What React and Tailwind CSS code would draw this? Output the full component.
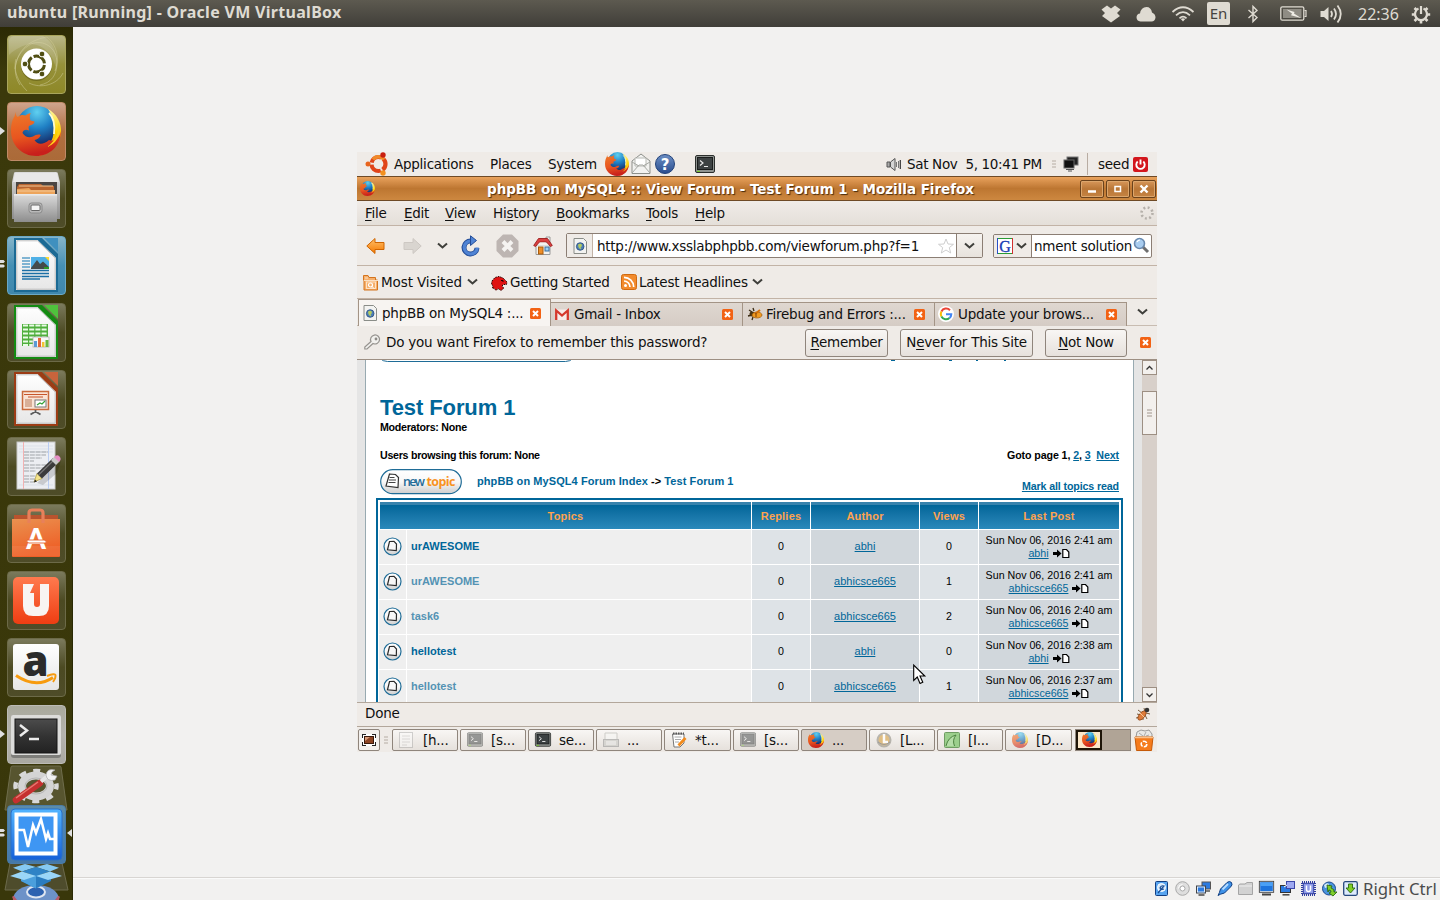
import React from "react";

const cx = (...a) => a.filter(Boolean).join(" ");

function Icon({ w, h, box, className, children }) {
  return (
    <svg width={w} height={h} viewBox={box || `0 0 ${w} ${h}`} className={cx("shrink-0 block overflow-visible", className)} fill="none">
      {children}
    </svg>
  );
}

function Gradients() {
  return (
    <svg className="absolute h-0 w-0">
      <defs>
        <radialGradient id="globe" cx="0.5" cy="0.15" r="0.9">
          <stop offset="0" stopColor="#5fd0f0" /><stop offset="0.45" stopColor="#1f7fc4" /><stop offset="1" stopColor="#14154f" />
        </radialGradient>
        <linearGradient id="fox" x1="0" y1="0" x2="0.2" y2="1">
          <stop offset="0" stopColor="#ee7a2a" /><stop offset="0.6" stopColor="#e8551f" /><stop offset="1" stopColor="#c81f1c" />
        </linearGradient>
        <linearGradient id="flame" x1="0" y1="0" x2="0" y2="1">
          <stop offset="0" stopColor="#fff6a0" /><stop offset="0.5" stopColor="#ffd400" /><stop offset="1" stopColor="#f07a18" />
        </linearGradient>
        <linearGradient id="metal" x1="0" y1="0" x2="0" y2="1">
          <stop offset="0" stopColor="#dcdcdc" /><stop offset="1" stopColor="#8d8d8d" />
        </linearGradient>
        <linearGradient id="paper" x1="0" y1="0" x2="0" y2="1">
          <stop offset="0" stopColor="#ffffff" /><stop offset="1" stopColor="#e6e6e6" />
        </linearGradient>
        <linearGradient id="bag" x1="0" y1="0" x2="0.3" y2="1">
          <stop offset="0" stopColor="#ea9150" /><stop offset="1" stopColor="#ee5f26" />
        </linearGradient>
        <linearGradient id="one" x1="0" y1="0" x2="0" y2="1">
          <stop offset="0" stopColor="#ff7a4e" /><stop offset="1" stopColor="#ee3d12" />
        </linearGradient>
        <linearGradient id="screen" x1="0" y1="0" x2="0" y2="1">
          <stop offset="0" stopColor="#4c4c4c" /><stop offset="0.5" stopColor="#333" /><stop offset="1" stopColor="#222" />
        </linearGradient>
        <linearGradient id="vbox" x1="0" y1="0" x2="0" y2="1">
          <stop offset="0" stopColor="#52b4ff" /><stop offset="1" stopColor="#1560d8" />
        </linearGradient>
        <linearGradient id="arrowOrange" x1="0" y1="0" x2="0" y2="1">
          <stop offset="0" stopColor="#ffc06a" /><stop offset="1" stopColor="#f57900" />
        </linearGradient>
        <linearGradient id="blueball" x1="0" y1="0" x2="0" y2="1">
          <stop offset="0" stopColor="#6d8fc4" /><stop offset="1" stopColor="#2a4d8f" />
        </linearGradient>
        <linearGradient id="pill" x1="0" y1="0" x2="0" y2="1">
          <stop offset="0" stopColor="#ffffff" /><stop offset="0.5" stopColor="#f8f8f8" /><stop offset="1" stopColor="#cdcdcd" />
        </linearGradient>
      </defs>
    </svg>
  );
}

function Firefox({ s, className }) {
  return (
    <Icon w={s} h={s} box="0 0 50 50" className={className}>
      <circle cx="26" cy="20.500" r="20.5" fill="url(#globe)" />
      <path d="M37 3 C46 8 50.500 17 50 26 C49 39 39 49 26 50 C33 46 41 38 42.500 28 C44 19 42 10 37 3Z" fill="url(#flame)" />
      <path d="M38 7 C43 12 44 20 43 28" stroke="#fffbd0" strokeWidth="1.8" />
      <path d="M4.700 5.500 C4.500 8 5 9.500 6.500 11 C10 8.500 12 8.500 14.500 9.500 C16 8.500 17.500 7.500 19.700 7 C18.500 9.500 18.500 12 19.500 14.500 L23.500 15.500 C23.500 18 20.500 19 18 20 C17 21 18 23 18 24.500 C15 23 12 24 11.500 27 C14 31 18 32 22 30.500 C24.500 29 27 28 29.700 29 C29 32 26 33.500 23.500 34 C26 38.500 32 39.500 38 34 C44 36 48 33 50 25 C49.500 40 39 50 25 50 C11 50 0 39 0 25 C0 17 2 12.500 3.500 10.500Z" fill="url(#fox)" />
      <path d="M47 17 C48.500 24 46 34 36 41 C42 39 47 34 48.500 27 C49 23 48.500 20 47 17Z" fill="#ffd21a" />
    </Icon>
  );
}

function Terminal({ w, h, className }) {
  return (
    <Icon w={w} h={h} box="0 0 20 18" className={className}>
      <rect x="0.5" y="0.5" width="19" height="17" rx="1.500" fill="#8f9390" stroke="#2c2f2d" />
      <rect x="2.500" y="2.500" width="15" height="12" fill="#3c4142" stroke="#1a1c1c" />
      <path d="M5 5.500 L8 8 L5 10.500 M9 11.500 h4" stroke="#e8e8e8" strokeWidth="1.200" />
      <path d="M2 16.300 h3" stroke="#73d216" />
    </Icon>
  );
}

/* Unity launcher */

function Tile({ tone, mark, children }) {
  const tones = {
    olive: "bg-linear-to-b from-[#b9b687] via-[#96913a] to-[#8e8827] border-[#a9a55c]",
    orange: "bg-linear-to-b from-[#cfa48c] via-[#b06f40] to-[#ab6a38] border-[#bf8a67]",
    dark: "bg-linear-to-b from-[#7b7a5c] via-[#4c4a22] to-[#4e4c28] border-[#6c6a48]",
    blue: "bg-linear-to-b from-[#86b5c9] via-[#4690b4] to-[#3f87ac] border-[#6aa9c6]",
    gray: "bg-linear-to-b from-[#a9a99c] via-[#b4b3ae] to-[#aaa9a2] border-[#bcbbb6]",
    vbox: "bg-linear-to-b from-[#5d8ca8] via-[#4a82b4] to-[#4579a8] border-[#4a7ca8]",
  };
  return (
    <div className="relative flex h-[59px] w-full shrink-0 justify-center">
      {mark === "one" && <Icon w={5} h={8} className="absolute left-0 top-[25px]"><path d="M0 0 L5 4 L0 8Z" fill="#e0e0e0" /></Icon>}
      {mark === "two" && <Icon w={5} h={8} className="absolute left-0 top-[24px]"><path d="M0 0h3.500l1.500 1.500l-1.500 1.500H0Z M0 4.500h3.500l1.500 1.500l-1.500 1.500H0Z" fill="#e0e0e0" /></Icon>}
      <div className={cx("flex h-[59px] w-[59px] items-center justify-center rounded-[4px] border", tones[tone])}>{children}</div>
    </div>
  );
}

function DocIcon({ edge, fold, children }) {
  return (
    <Icon w={59} h={59} className="-m-px">
      <path d="M8 3 H31 L50 21.500 V55 H8Z" fill="url(#paper)" stroke={edge} strokeWidth="2" />
      <path d="M9.800 4.800 H30.500 L48.200 22 V53.200 H9.800Z" stroke="#b8b8b8" strokeWidth="0.900" />
      <path d="M30 2 L51 22 V18 L35 2Z" fill={edge} />
      <path d="M37 2 H51 V16Z" fill={fold} />
      {children}
    </Icon>
  );
}

function Launcher() {
  return (
    <div className="relative flex h-[873px] w-[73px] shrink-0 flex-col gap-[8px] overflow-hidden border-r border-[#2a2905] bg-linear-to-b from-[#2b2905] via-[#3b390b] via-5% to-[#39370a] pt-[8px]">
      <Tile tone="olive">
        <Icon w={59} h={59} className="-m-px">
          <path d="M13 50 C4 36 8 18 24 9 C36 4 50 12 50 28 C50 40 44 48 33 50 M8 34 C10 18 18 6 40 2 C50 10 53 24 48 36 M20 56 C10 46 6 34 9 24 M56 38 C50 50 34 54 22 48" stroke="#ccc993" strokeOpacity="0.6" strokeWidth="0.9" />
          <path d="M36 1 C48 8 52 22 49 34 C46 20 38 10 24 9 C16 10 8 14 2 20 V6 Q3 1 8 1Z" fill="#fff" fillOpacity="0.14" />
          <circle cx="29.500" cy="30.500" r="15.500" fill="#55520f" fillOpacity="0.5" />
          <circle cx="29.500" cy="29" r="15.500" fill="#fff" />
          <circle cx="29.500" cy="29" r="8" stroke="#504e13" strokeWidth="3" strokeDasharray="14.700 2.050" strokeDashoffset="-1" />
          <circle cx="18" cy="29" r="2.900" fill="#504e13" stroke="#fff" strokeWidth="1" />
          <circle cx="35" cy="19" r="2.900" fill="#504e13" stroke="#fff" strokeWidth="1" />
          <circle cx="35" cy="39" r="2.900" fill="#504e13" stroke="#fff" strokeWidth="1" />
        </Icon>
      </Tile>
      <Tile tone="orange" mark="one"><Firefox s={50} className="-mt-[2px]" /></Tile>
      <Tile tone="dark">
        <Icon w={59} h={59} className="-m-px">
          <path d="M7 4 Q7 3 9 3 H49 Q51 3 51 5 L53 13 V50 H5 V13Z" fill="url(#metal)" />
          <path d="M8 4 H50 L52 13 H6Z" fill="#e8e8e8" />
          <rect x="9" y="13" width="41" height="14" fill="#4b4643" />
          <path d="M10 25 V18 L12 15 H34 L36 17 H47 V25Z" fill="#b9652f" />
          <path d="M10 25 V20 L22 19 L24 21 H48 V25Z" fill="#eda55c" />
          <path d="M10 22 H48 M12 17H46" stroke="#f3c795" />
          <path d="M7 25 H50 V53 H7Z" fill="url(#metal)" />
          <path d="M7 25 H50 V26.500 H7Z" fill="#e9e9e9" />
          <rect x="22" y="34" width="13" height="10" rx="2.500" fill="#b9b9b9" stroke="#8a8a8a" />
          <rect x="24" y="36" width="9" height="5.500" rx="1" fill="#f5f5f5" stroke="#666" />
        </Icon>
      </Tile>
      <Tile tone="blue" mark="two">
        <DocIcon edge="#1c6a94" fold="#3f90bf">
          <path d="M15 22h8 M15 25h8 M15 28h8 M15 31h8" stroke="#5a9fc8" strokeWidth="1.500" />
          <path d="M15 34.500h27 M15 37.500h27 M15 40.500h27 M15 43h18" stroke="#1b6fa5" strokeWidth="1.500" />
          <rect x="24" y="21" width="18" height="12" fill="#4fb0e6" />
          <path d="M24 32 L30 24 L33 28 L36 25.500 L42 31 V33 H24Z" fill="#444b4a" /><path d="M38 21h4v4Z" fill="#ffd92e" /><path d="M37 31h5v2h-5Z" fill="#2c9b28" />
        </DocIcon>
      </Tile>
      <Tile tone="dark">
        <DocIcon edge="#148a12" fold="#4fc23c">
          <rect x="15" y="21" width="26" height="22" fill="#4faf3d" />
          <path d="M16 22.500h24M16 26.500h24M16 30.500h24M16 34.500h24M16 38.500h24M16 42h24" stroke="#e9fbe6" strokeWidth="2.200" strokeDasharray="5 1.200" />
          <rect x="26" y="34" width="16" height="10" fill="#f8f8f8" stroke="#aaa" strokeWidth="0.7" />
          <path d="M28.500 44v-6" stroke="#5b9ad5" strokeWidth="3" /><path d="M32.500 44v-9" stroke="#e2683c" strokeWidth="3" /><path d="M36.200 44v-5" stroke="#f0c534" strokeWidth="2.500" /><path d="M40 44v-7" stroke="#68b842" strokeWidth="3" />
        </DocIcon>
      </Tile>
      <Tile tone="dark">
        <DocIcon edge="#9c3c15" fold="#c8643c">
          <rect x="15.500" y="21.500" width="26" height="18" fill="#f9e3d5" stroke="#c96b3d" strokeWidth="1.500" />
          <path d="M17 24.500h23M21 27h15" stroke="#c8552a" strokeWidth="1.200" />
          <path d="M18 30h7M18 32h7M18 34h7M18 36h7" stroke="#b97c5a" strokeWidth="1" />
          <rect x="28" y="30" width="11" height="7" fill="#fff" stroke="#777" /><path d="M30 35 l3-2 l2 1 l3-3" stroke="#35a33a" strokeWidth="1.200" />
          <path d="M28.500 40v3 M28.500 41.500 l-5 3 M28.500 41.500 l5 3" stroke="#5b5b5b" strokeWidth="1.800" />
        </DocIcon>
      </Tile>
      <Tile tone="dark">
        <Icon w={59} h={59} className="-m-px">
          <rect x="10" y="5" width="38" height="47" fill="#eceef2" stroke="#c8c8c8" />
          <path d="M12 9h34M12 12h34M12 15h34M12 48h34" stroke="#d5dbe6" strokeWidth="0.7" /><path d="M16.500 5v47" stroke="#f2b2b2" /><path d="M41.500 5v47" stroke="#b9cdf2" />
          <path d="M17 15h24M17 18h22M17 21h18M17 24h10 M17 28h24M17 31h20M17 34h12 M17 39h12M17 42h11M17 45h10" stroke="#a0a3a7" strokeWidth="1.100" strokeDasharray="5 0.800" />
          <path d="M30 46 L54 24 L50 36 L36 48Z" fill="#000" fillOpacity="0.15" />
          <path d="M27 45 L30 36.500 L35 41.500Z" fill="#f4e48c" stroke="#a79539" strokeWidth="0.700" /><path d="M27 45.500 l1-3 2 2Z" fill="#222" />
          <path d="M30 36.500 L46 21 L51 26 L35 41.500Z" fill="#3b3b3b" /><path d="M31.500 38 L47 23" stroke="#787878" strokeWidth="1.200" />
          <path d="M44 23 L47.500 19.500 L52.500 24.500 L49 28Z" fill="#c9c9c9" /><path d="M47 20 q3-3 5.500-0.500 q2.500 2.500-0.500 5.500Z" fill="#e58fc5" />
        </Icon>
      </Tile>
      <Tile tone="dark">
        <Icon w={59} h={59} className="-m-px">
          <path d="M7 11 H51 V16 H7Z" fill="#b9532e" />
          <path d="M5 15 H53 V52 Q53 53 52 53 H6 Q5 53 5 52Z" fill="url(#bag)" />
          <path d="M22 19 V9 Q22 6 25 6 H33 Q36 6 36 9 V19" stroke="#e8805a" strokeWidth="3.200" />
          <text x="29" y="45" textAnchor="middle" fontFamily="Lato" fontWeight="900" fontSize="28" fill="#fff">A</text>
          <path d="M20 36 h17 q3 0 2 3 h-17 q-3 0-2-3Z" fill="#fff" stroke="#e4622e" strokeWidth="0.900" />
          <path d="M5 42h48v10H5Z" fill="#fff" fillOpacity="0.07" />
        </Icon>
      </Tile>
      <Tile tone="dark">
        <Icon w={59} h={59} className="-m-px">
          <rect x="6" y="6" width="46" height="47" rx="5" fill="url(#one)" />
          <path d="M16 13 H27 L23 22 H27 V33 Q27 36 30 36 Q33 36 33 33 V13 H42 V35 Q42 45 32 45 H26 Q16 45 16 35Z" fill="#f8f4f2" />
        </Icon>
      </Tile>
      <Tile tone="dark">
        <Icon w={59} h={59} className="-m-px">
          <rect x="6" y="6" width="46" height="46" rx="3" fill="url(#paper)" />
          <text x="28.500" y="38" textAnchor="middle" fontFamily="Open Sans" fontWeight="800" fontSize="42" fill="#2b2b2b">a</text>
          <path d="M9 37.500 Q29 51 46 39.500" stroke="#f79b0e" strokeWidth="3" /><path d="M40 38 Q48 35 48.500 37 Q49 40 46 44" stroke="#f79b0e" strokeWidth="1.900" />
        </Icon>
      </Tile>
      <Tile tone="gray" mark="one">
        <Icon w={59} h={59} className="-m-px">
          <rect x="4" y="10" width="50" height="43" rx="3" fill="#7e7e7a" /><rect x="4" y="10" width="50" height="40" rx="2" fill="#dcdcda" />
          <rect x="8" y="14" width="42" height="34" fill="url(#screen)" stroke="#141414" />
          <path d="M13 20 L20 25.500 L13 31" stroke="#ececec" strokeWidth="2.500" /><path d="M22 34h10" stroke="#ececec" strokeWidth="2.500" />
        </Icon>
      </Tile>
      <Icon w={62} h={44} className="-mt-[6px] ml-[5px]">
        <path d="M6 1 Q6 0 8 0 H54 Q56 0 56 1 L62 44 H0Z" fill="#57552f" stroke="#6f6d4c" />
        <ellipse cx="31" cy="20" rx="20.500" ry="15" stroke="#d9d9d9" strokeWidth="4.500" strokeDasharray="7 7.050" strokeDashoffset="3.500" />
        <ellipse cx="31" cy="20" rx="14" ry="10.500" stroke="#d4d4d4" strokeWidth="8" />
        <ellipse cx="31" cy="20" rx="11" ry="8" stroke="#b4b4b4" strokeWidth="1" />
        <path d="M11 34 L35 17" stroke="#c53030" strokeWidth="6.500" strokeLinecap="round" /><path d="M11 32 L33 16" stroke="#e57a72" strokeWidth="1.500" />
        <path d="M36 15.500 L45 8" stroke="#e6e6e6" strokeWidth="4" /><path d="M50 4 q-8-2-9 5 q1 7 9 5 l2-4 -6-1 1-3Z" fill="#f2f2f2" stroke="#aaa" strokeWidth="0.700" />
      </Icon>
      <div className="relative z-10 -mt-[13px]">
        <Tile tone="vbox" mark="two">
          <Icon w={59} h={59} className="-m-px">
            <rect x="4" y="4" width="51" height="51" rx="4" fill="url(#vbox)" stroke="#2a70c8" />
            <rect x="9.500" y="9.500" width="39" height="39" fill="#3e96f3" stroke="#fff" strokeWidth="4" />
            <path d="M10 25 h7 L21 42 L26 20 L29 28 L34 14 L39 34 L41 28 L43 34 H48" stroke="#fff" strokeWidth="2.500" />
          </Icon>
        </Tile>
        <Icon w={5} h={8} className="absolute right-0 top-[24px]"><path d="M5 0 L0 4 L5 8Z" fill="#e0e0e0" /></Icon>
      </div>
      <Icon w={62} h={38} className="-mt-[9px] ml-[5px]">
        <path d="M5 0 H57 L63 27 H0Z" fill="#4e4c2c" stroke="#6c6a4c" />
        <ellipse cx="31" cy="36" rx="23" ry="14" fill="#6d92c8" /><path d="M8 36 q-2-3 1-3 l3 4 v3h-4Z M54 36q2-3-1-3 l-3 4 v3h4Z" fill="#b85a68" />
        <ellipse cx="31" cy="29" rx="9" ry="5.500" fill="#2d62b0" stroke="#dfe6f0" strokeWidth="2" />
        <path d="M16 15 L31 10 L46 15 V18 L31 25.500 L16 18Z" fill="#2a7cc0" />
        <path d="M16 15 L31 12 V25.500 L16 18Z" fill="#4b9fdc" />
        <path d="M8 4.700 L20 1 L31 4 L17 8.500Z M54 4.700 L42 1 L31 4 L45 8.500Z" fill="#86caf2" />
        <path d="M17 8.500 L31 4 L45 8.500 L31 13Z" fill="#2f83c6" />
        <path d="M5 13 L17 8.500 L31 13 L19 17Z M57 13 L45 8.500 L31 13 L43 17Z" fill="#9ad6f8" />
      </Icon>
    </div>
  );
}

/* Host top panel */

function TopBar() {
  const c = "#dfdbd2";
  return (
    <div className="flex h-[27px] w-full shrink-0 items-center bg-linear-to-b from-[#5d5a50] to-[#403e39] text-[#dfdbd2]">
      <div className="ml-[7px] w-[1093px] whitespace-nowrap pb-[2px] font-['Noto_Sans',sans-serif] text-[16px] leading-[25px] font-bold tracking-[0.3px]">ubuntu [Running] - Oracle VM VirtualBox</div>
      <Icon w={20} h={18} className="ml-px"><path d="M6 0.500 L10 3.500 L14 0.500 L19.500 4.500 L16 8 L19 11 L10 17.500 L1 11 L4 8 L0.500 4.500Z" fill={c} /></Icon>
      <Icon w={20} h={16} className="ml-[15px]"><path d="M4.500 15.500 Q0.500 15 0.500 11 Q1 7.500 4 7.500 Q5 1 10.500 1 Q15 1 16 6.500 Q19.500 8 19.500 11.500 Q19 15.500 15.500 15.500Z" fill={c} /></Icon>
      <Icon w={22} h={16} className="ml-[16px]"><path d="M0.500 6 Q11 -3.500 21.500 6 M4 9.300 Q11 3 18 9.300 M7.500 12.300 Q11 9 14.500 12.300" stroke={c} strokeWidth="1.800" /><path d="M8.800 13 Q11 11.500 13.200 13 L11 15.500Z" fill={c} /></Icon>
      <div className="ml-[13px] flex h-[23px] w-[23px] items-center justify-center rounded-[2px] bg-[#dfdbd2] font-['Noto_Sans',sans-serif] text-[15px] leading-[23px] text-[#454340]">En</div>
      <Icon w={10} h={18} className="ml-[18px]"><path d="M0.500 5 L9 12.500 L5 16.500 V1.500 L9 5.500 L0.500 13" stroke={c} strokeWidth="1.400" /></Icon>
      <Icon w={27} h={15} className="ml-[22px]">
        <rect x="0.800" y="0.800" width="23" height="13.400" rx="1.500" stroke={c} strokeWidth="1.300" /><path d="M24.500 4.500h1.500v6h-1.500" stroke={c} strokeWidth="1.200" />
        <rect x="3" y="3" width="18.500" height="9" fill="#8f8c84" /><path d="M6.500 3.500 L14.500 6 L14 7.500 L21 12 L11 9.300 L12 7.600Z" fill="#f0ede6" />
      </Icon>
      <Icon w={23} h={20} className="ml-[13px]"><path d="M0.500 7 h3.500 l4.500-4 v14 l-4.500-4 h-3.500Z" fill={c} /><path d="M11 7 Q13 10 11 13 M14 4.500 Q18 10 14 15.500 M17.500 1.500 Q24 10 17.500 18.500" stroke={c} strokeWidth="1.800" /></Icon>
      <div className="ml-[15px] w-[53px] whitespace-nowrap font-['Noto_Sans',sans-serif] text-[16px] leading-[26px]">22:36</div>
      <Icon w={20} h={20}>
        <path d="M7.500 4.600 A6 6 0 1 0 12.500 4.600" stroke={c} strokeWidth="2.200" /><path d="M10 2v8" stroke={c} strokeWidth="2.200" />
        <path d="M0.800 10.500h3M16.200 10.500h3M10 16.500v3M3.500 4l2 2M14.500 15l2 2M3.500 17l2-2M14.500 6l2-2" stroke={c} strokeWidth="2.600" />
      </Icon>
    </div>
  );
}

/* Guest desktop */

const Chevron = ({ className }) => <Icon w={11} h={6} className={className}><path d="M1 0.500 L5.500 4.500 L10 0.500" stroke="#3f3f3b" strokeWidth="2" /></Icon>;

function CloseX({ className }) {
  return (
    <Icon w={11} h={11} className={className}>
      <rect width="11" height="11" rx="1.500" fill="#f26214" />
      <path d="M3 3 L8 8 M8 3 L3 8" stroke="#fff" strokeWidth="2" />
    </Icon>
  );
}

const Page = ({ className }) => (
  <Icon w={14} h={16} className={className}>
    <path d="M1 0.500 H10.500 L13.500 3.500 V15.500 H1Z" fill="#f3f3f1" stroke="#8a8d88" />
    <circle cx="7.200" cy="8.500" r="3.800" fill="#4f7fb8" stroke="#234a7a" strokeWidth="0.800" /><path d="M5 6.700 q2-2 4 0 q0 2-1.500 3 l1 1.500 q-2 0-3-2Z" fill="#b4cc60" />
  </Icon>
);

const Key = ({ k, rest, pre }) => <>{pre}<span className="underline decoration-1 underline-offset-2">{k}</span>{rest}</>;

function GnomePanel() {
  return (
    <div className="flex h-[24px] shrink-0 items-center">
      <Icon w={24} h={24} className="ml-[8px]">
        <circle cx="13.500" cy="12" r="7" stroke="#e0441a" strokeWidth="4.200" strokeDasharray="12.600 2" strokeDashoffset="6" />
        <path d="M8 7.500 A7 7 0 0 1 19 7.500" stroke="#f08a2a" strokeWidth="3.500" />
        <circle cx="3" cy="12" r="2.500" fill="#e8641c" /><circle cx="18" cy="3" r="2.700" fill="#c81f10" /><circle cx="18" cy="21" r="2.700" fill="#f2901f" />
      </Icon>
      <div className="ml-[5px] w-[96px]">Applications</div>
      <div className="w-[58px]">Places</div>
      <div className="w-[57px]">System</div>
      <Firefox s={24} className="-mt-px" />
      <Icon w={20} h={22} className="ml-[2px]"><path d="M1 8 L10 1 L19 8 V20.500 H1Z" fill="#f2f2f0" stroke="#8d8f8a" /><path d="M4 5 h11 v8 h-11Z" fill="#fff" stroke="#b8bab5" /><path d="M1 20 L8 12 H12 L19 20 M1 9 L8 13 M19 9 L12 13" stroke="#a5a7a2" /></Icon>
      <Icon w={20} h={20} className="ml-[4px]"><circle cx="10" cy="10" r="9.500" fill="url(#blueball)" stroke="#24437a" /><text x="10" y="15.500" textAnchor="middle" fontFamily="DejaVu Sans" fontWeight="bold" fontSize="15" letterSpacing="0" fill="#fff">?</text></Icon>
      <Terminal w={20} h={18} className="ml-[20px]" />
      <Icon w={16} h={15} className="ml-[171px]"><path d="M1 5h3v5h-3Z" fill="#aaa" stroke="#555" /><path d="M4.500 5 L9 1.500 V13.500 L4.500 10Z" fill="#d5d5d5" stroke="#555" /><path d="M10.500 5v5M12.500 4v7" stroke="#777" /><path d="M14.300 3v9" stroke="#333" strokeWidth="1.200" /></Icon>
      <div className="ml-[5px] w-[145px] whitespace-pre tracking-[-0.33px]">Sat Nov  5, 10:41 PM</div>
      <Icon w={4} h={8}><path d="M0 1h4M0 4h4M0 7h4" stroke="#b5aca3" /></Icon>
      <Icon w={16} h={16} className="ml-[7px]"><rect x="4" y="1" width="11" height="8" fill="#222" stroke="#777" /><rect x="1" y="4" width="10" height="8" fill="#111" stroke="#666" /><path d="M3 13.500h8M5 15h4" stroke="#555" /></Icon>
      <div className="ml-[8px] h-[22px] w-px bg-[#b8aca2]" />
      <div className="ml-[10px] w-[35px]">seed</div>
      <Icon w={15} h={15}><rect width="15" height="15" rx="2" fill="#d3161c" /><path d="M4.700 4.500 A4.200 4.200 0 1 0 10.300 4.500 M7.500 2.500v5" stroke="#fff" strokeWidth="1.900" /></Icon>
    </div>
  );
}

function WinButton({ className, children }) {
  return <div className={cx("flex h-[18px] w-[24px] items-center justify-center rounded-[2px] border border-[#6b421b] bg-linear-to-b from-[#d7975a] via-[#b97636] to-[#c58443] shadow-[inset_0_0_0_1px_#dca66c]", className)}>{children}</div>;
}

function TitleBar() {
  return (
    <div className="flex h-[25px] shrink-0 items-center border-y border-[#6e4a26] bg-linear-to-b from-[#e9a25c] via-[#bd7631] to-[#cd8840]">
      <Firefox s={15} className="ml-[3px]" />
      <div className="ml-[112px] w-[593px] font-bold tracking-[-0.03px] text-white [text-shadow:1px_1px_1px_#4a2c0c]">phpBB on MySQL4 :: View Forum - Test Forum 1 - Mozilla Firefox</div>
      <WinButton><Icon w={10} h={10}><path d="M1 7.500h8" stroke="#fff" strokeWidth="2.500" /></Icon></WinButton>
      <WinButton className="ml-[2px]"><Icon w={8} h={8}><rect x="1" y="1.500" width="5.500" height="5" stroke="#fff" strokeWidth="1.500" /></Icon></WinButton>
      <WinButton className="ml-[2px]"><Icon w={10} h={10}><path d="M1.500 1.500 L8.500 8.500 M8.500 1.500 L1.500 8.500" stroke="#fff" strokeWidth="2.400" /></Icon></WinButton>
    </div>
  );
}

function MenuBar() {
  return (
    <div className="flex h-[25px] shrink-0 items-center border-b border-[#c2b3a6] bg-linear-to-b from-[#f0ece8] to-[#e4dfd9] pl-[8px]">
      <div className="w-[39px]"><Key k="F" rest="ile" /></div>
      <div className="w-[41px]"><Key k="E" rest="dit" /></div>
      <div className="w-[48px]"><Key k="V" rest="iew" /></div>
      <div className="w-[63px]"><Key pre="Hi" k="s" rest="tory" /></div>
      <div className="w-[90px]"><Key k="B" rest="ookmarks" /></div>
      <div className="w-[49px]"><Key k="T" rest="ools" /></div>
      <div className="w-[445px]"><Key k="H" rest="elp" /></div>
      <Icon w={14} h={14}><circle cx="7" cy="7" r="5.500" stroke="#b5b0aa" strokeWidth="2.600" strokeDasharray="1.900 2.420" /></Icon>
    </div>
  );
}

function NavBar() {
  return (
    <div className="flex h-[40px] shrink-0 items-center border-b border-[#c2b3a6] bg-[#efebe7]">
      <Icon w={19} h={18} className="ml-[9px]"><path d="M0.800 9 L9 1.500 V5.500 H18 V12.500 H9 V16.500Z" fill="url(#arrowOrange)" stroke="#cf6400" /></Icon>
      <Icon w={19} h={18} className="ml-[18px]"><path d="M18.200 9 L10 1.500 V5.500 H1 V12.500 H10 V16.500Z" fill="#d9d5d0" stroke="#cdc8c3" /></Icon>
      <Chevron className="ml-[15px]" />
      <Icon w={20} h={22} className="ml-[13px]"><path d="M10 6 A6.500 6.500 0 1 0 16 13" stroke="#234c97" strokeWidth="5" /><path d="M10 6 A6.500 6.500 0 1 0 16.200 12.500" stroke="#4f83d4" strokeWidth="3.200" /><path d="M9.500 0.800 L15.500 5.500 L9.500 10.500Z" fill="#4f83d4" stroke="#234c97" /></Icon>
      <Icon w={23} h={24} className="ml-[15px]"><path d="M7 0.500 H16 L22.500 7 V17 L16 23.500 H7 L0.500 17 V7Z" fill="#bdb5b2" /><path d="M7 7.500 L16 16.500 M16 7.500 L7 16.500" stroke="#f5f3f1" strokeWidth="4" /></Icon>
      <Icon w={20} h={20} className="ml-[14px]">
        <path d="M13 1 h4 v6h-4Z" fill="#eee" stroke="#888" strokeWidth="0.800" /><path d="M3 9 H17 V18.500 H3Z" fill="#f4f2ee" stroke="#999" /><path d="M0.700 9.500 L5.500 2.500 H14.500 L19.300 9.500 L17.500 10.500 L13.500 6 H6.500 L2.500 10.500Z" fill="#d94040" stroke="#9c1c1c" strokeWidth="0.900" /><path d="M4 9.500 L7 6.500 H13 L16 9.500Z" fill="#f4f2ee" />
        <rect x="5.500" y="11" width="4.500" height="7" fill="#ef8d26" stroke="#a85c0d" /><rect x="12" y="11" width="4" height="4" fill="#9cd0f2" stroke="#3a6fa0" />
      </Icon>
      <div className="ml-[13px] flex h-[25px] w-[417px] items-center rounded-[2px] border border-[#8b7e74] bg-white">
        <div className="flex h-full w-[26px] items-center justify-center border-r border-[#c2b3a6] bg-[#efebe7]"><Page /></div>
        <div className="ml-[4px] w-[341px] shrink-0 tracking-[-0.27px]">http://www.xsslabphpbb.com/viewforum.php?f=1</div>
        <Icon w={16} h={16}><path d="M8 1 L10 6 L15.500 6.300 L11.300 9.600 L12.700 15 L8 12 L3.300 15 L4.700 9.600 L0.500 6.300 L6 6Z" stroke="#cfcfcf" fill="#fff" /></Icon>
        <div className="ml-auto flex h-full w-[26px] items-center justify-center border-l border-[#8b7e74] bg-linear-to-b from-[#f6f3f0] to-[#e8e3dd]"><Chevron /></div>
      </div>
      <div className="ml-[10px] flex h-[24px] w-[159px] items-center overflow-hidden rounded-[2px] border border-[#8b7e74] bg-white">
        <div className="flex h-full w-[38px] shrink-0 items-center border-r border-[#8b7e74] bg-[#efebe7]">
          <Icon w={16} h={16} className="ml-[3px]"><rect x="0.500" y="0.500" width="15" height="15" fill="#fff" stroke="#2a9b35" /><path d="M0.500 0v16" stroke="#2a50c8" /><path d="M15.500 0v16" stroke="#d03030" /><text x="8" y="13.500" textAnchor="middle" fontFamily="Liberation Serif" fontSize="16" letterSpacing="0" fill="#173bb4" stroke="#173bb4" strokeWidth="0.300">G</text></Icon>
          <Chevron className="ml-[3px]" />
        </div>
        <div className="ml-[2px] w-[99px] shrink-0">nment solution</div>
        <Icon w={17} h={17}><path d="M10 10 L15 15" stroke="#6f6f6f" strokeWidth="3" /><circle cx="6.500" cy="6.500" r="5" fill="#a9cdf0" stroke="#6989ae" strokeWidth="1.600" /><path d="M4 5 q1-2 3-2" stroke="#fff" strokeWidth="1.200" /></Icon>
      </div>
    </div>
  );
}

function Bookmarks() {
  return (
    <div className="flex h-[33px] shrink-0 items-center border-b border-[#c2b3a6] bg-[#efebe7]">
      <Icon w={16} h={16} className="ml-[6px] mt-[2px]"><path d="M0.500 0.500 H5 L6 2.500 H12.500 V5 H14.500 V15 H1 V5 H0.500Z" fill="#f6b06c" stroke="#d4741e" /><path d="M1 5.500h14M2 3h3" stroke="#fbe0c4" /><rect x="3.500" y="7" width="9" height="6.500" stroke="#fde6cf" strokeWidth="0.900" /><circle cx="7.500" cy="10" r="2" stroke="#fff" strokeWidth="1.200" /><path d="M9 11.500 l2 2" stroke="#fff" /></Icon>
      <div className="ml-[2px] w-[86px] tracking-[-0.1px]">Most Visited</div>
      <Chevron />
      <Icon w={17} h={15} className="ml-[13px] mt-[2px]"><path d="M1 5 L4 1.500 L8 0.500 L12 2 L16 6 L15.500 8.500 L12 8.500 L11 10.500 L13 12 L10 14.500 L7 12.500 L5 14.500 L3 12 L1.500 12.500 L2 9.500 L0.500 8.500Z" fill="#e01212" stroke="#240404" strokeWidth="1" strokeDasharray="1.500 1" /><path d="M10 4.500h2v1.500" stroke="#200" /></Icon>
      <div className="ml-[2px] w-[111px] tracking-[-0.33px]">Getting Started</div>
      <Icon w={16} h={16}><rect x="0.500" y="0.500" width="15" height="15" rx="2" fill="#f28b2d" stroke="#d16a10" /><circle cx="4.500" cy="11.500" r="1.500" fill="#fff" /><path d="M3 7 A6 6 0 0 1 9 13 M3 3.300 A9.700 9.700 0 0 1 12.700 13" stroke="#fff" strokeWidth="1.700" /></Icon>
      <div className="ml-[2px] w-[113px]">Latest Headlines</div>
      <Chevron />
    </div>
  );
}

function Tab({ active, icon, label }) {
  return (
    <div className={cx("flex items-center border-[#a39486]", active ? "h-[28px] w-[193px] border-x border-t bg-[#f7f4f1] pb-px" : "mt-[3px] h-[24px] w-[192px] border-r border-t bg-linear-to-b from-[#dfd7d0] to-[#d5ccc5] pb-px")}>
      <div className="ml-[4px] flex w-[19px] shrink-0">{icon}</div>
      <div className="w-[148px] shrink-0">{label}</div>
      <CloseX />
    </div>
  );
}

function Tabs() {
  return (
    <div className="flex h-[27px] shrink-0 items-start border-b border-[#c8bcb1] bg-[#efebe7] pl-px">
      <Tab active icon={<Page />} label="phpBB on MySQL4 :..." />
      <Tab label="Gmail - Inbox" icon={<Icon w={14} h={11}><path d="M0 0.500h14v10.500h-14Z" fill="#f7ecea" /><path d="M1.200 11 V1.500 L7 6.500 L12.800 1.500 V11" stroke="#d5392d" strokeWidth="2.300" /></Icon>} />
      <Tab label="Firebug and Errors :..." icon={<Icon w={16} h={14}><path d="M2 3 l3 2 M1 9 l4-1 M5 13 l1-3 M6 1 l1 3" stroke="#3a2a12" strokeWidth="1.300" /><circle cx="5" cy="7" r="2.500" fill="#4a3312" /><ellipse cx="10" cy="8" rx="5" ry="3" fill="#f09a20" stroke="#9a5608" strokeWidth="0.700" /><path d="M8 7 l5-4" stroke="#d46f08" strokeWidth="2" /><path d="M9 6 v4" stroke="#7a4208" /></Icon>} />
      <Tab label="Update your brows..." icon={<Icon w={16} h={16} className="-ml-px"><circle cx="8" cy="8" r="8" fill="#fff" /><path d="M12 4.200 A5.300 5.300 0 0 0 3.400 5.500" stroke="#ea4335" strokeWidth="2" /><path d="M3.400 5.500 A5.300 5.300 0 0 0 3.400 10.500" stroke="#fbbc05" strokeWidth="2" /><path d="M3.400 10.500 A5.300 5.300 0 0 0 11.500 12" stroke="#34a853" strokeWidth="2" /><path d="M11.500 12 Q13.300 10.500 13.300 8.200 H8" stroke="#4285f4" strokeWidth="2" /></Icon>} />
      <Chevron className="ml-[10px] mt-[10px]" />
    </div>
  );
}

function Btn({ className, children }) {
  return <div className={cx("flex h-[28px] items-center justify-center rounded-[3px] border border-[#8f857c] bg-linear-to-b from-[#f8f6f4] to-[#e6e1dc] pb-px", className)}>{children}</div>;
}

function PasswordBar() {
  return (
    <div className="flex h-[34px] shrink-0 items-center border-b border-[#9d8f83] bg-[#efebe7]">
      <Icon w={17} h={15} className="ml-[7px]"><path d="M9 8.500 L3 14 H0.800 V12 L7 6.500 A4.500 4.500 0 1 1 9 8.500Z" fill="#f2f1ee" stroke="#96938f" strokeWidth="1.200" /><circle cx="12" cy="4" r="1.400" fill="#8d8a86" /></Icon>
      <div className="ml-[5px] w-[419px] pb-[2px] tracking-[-0.22px]">Do you want Firefox to remember this password?</div>
      <Btn className="w-[83px]"><div><Key k="R" rest="emember" /></div></Btn>
      <Btn className="ml-[12px] w-[133px]"><div><Key pre="N" k="e" rest="ver for This Site" /></div></Btn>
      <Btn className="ml-[12px] w-[82px]"><div><Key k="N" rest="ot Now" /></div></Btn>
      <CloseX className="ml-[13px]" />
    </div>
  );
}

const rows = [
  { topic: "urAWESOME", seen: false, author: "abhi", views: 0, time: "2:41" },
  { topic: "urAWESOME", seen: true, author: "abhicsce665", views: 1, time: "2:41" },
  { topic: "task6", seen: true, author: "abhicsce665", views: 2, time: "2:40" },
  { topic: "hellotest", seen: false, author: "abhi", views: 0, time: "2:38" },
  { topic: "hellotest", seen: true, author: "abhicsce665", views: 1, time: "2:37" },
];

const Link = ({ children }) => <span className="text-[#006699] underline underline-offset-[1px]">{children}</span>;

function TopicTable() {
  const head = "flex items-center justify-center border-t-[3px] border-[#3783ad] bg-linear-to-b from-[#006699] to-[#2a89bb] pb-[3px]";
  return (
    <div className="mx-[10px] mt-[4px] border-2 border-b-0 border-[#006699] bg-white pt-[2px]">
      <div className="ml-[2px] grid h-[27px] grid-cols-[371px_58px_108px_58px_140px] gap-px text-[11px] font-bold tracking-[0.2px] text-[#ffa34f]">
        <div className={head}>Topics</div><div className={head}>Replies</div><div className={head}>Author</div><div className={head}>Views</div><div className={head}>Last Post</div>
      </div>
      {rows.map((r, i) => (
        <div key={i} className="mt-px ml-px grid h-[34px] grid-cols-[27px_344px_58px_108px_58px_140px] gap-px text-[10.670px] font-normal leading-[13px] tracking-normal text-black">
          <div className="flex items-center justify-center bg-[#efefef] pb-px">
            <Icon w={19} h={19}><circle cx="9.500" cy="9.500" r="8.500" fill="url(#pill)" stroke="#1f6c97" strokeWidth="1.200" /><path d="M6.500 4.500 L11 4.300 L13.500 7 L13.300 13.500 L4.500 12.800Z" stroke="#2a2a2a" fill="#f7f7f7" strokeWidth="1.200" /></Icon>
          </div>
          <div className={cx("flex items-center bg-[#efefef] pl-[4px] pb-[2px] text-[11px] font-bold", r.seen ? "text-[#5493b4]" : "text-[#006699]")}>{r.topic}</div>
          <div className="flex items-center justify-center bg-[#dee3e7] pb-[2px]">0</div>
          <div className="flex items-center justify-center bg-[#d1d7dc] pb-[2px] text-[11px]"><Link>{r.author}</Link></div>
          <div className="flex items-center justify-center bg-[#dee3e7] pb-[2px]">{r.views}</div>
          <div className="flex flex-col items-center justify-center bg-[#d1d7dc] pb-px">
            <div>Sun Nov 06, 2016 {r.time} am</div>
            <div className="flex items-center gap-[4px]"><Link>{r.author}</Link>
              <Icon w={17} h={9}><path d="M0 3 h4 V0.500 L8.500 4.500 L4 8.500 V6 H0Z" fill="#000" /><path d="M9.800 0.500 H13.500 L15.800 3 V8.500 H9.800Z" fill="#fff" stroke="#000" strokeWidth="1.200" /></Icon>
            </div>
          </div>
        </div>
      ))}
    </div>
  );
}

function Forum() {
  return (
    <div className="flex h-[342px] shrink-0 overflow-hidden bg-[#e5e5e5] font-['Liberation_Sans',Arial,sans-serif] text-[10.670px] font-bold tracking-[-0.27px]">
      <div className="ml-[8px] w-[769px] border-x border-[#98aab1] bg-white text-black">
        <div className="flex h-[3px] justify-between overflow-hidden pl-[10px] pr-[127px]">
          <div className="-mt-[21px] h-[23px] w-[201px] rounded-full border-[1.500px] border-[#1f6c97]" />
          <div className="flex"><div className="h-px w-[4px] bg-[#006699]" /><div className="ml-[54px] h-px w-[3px] bg-[#006699]" /><div className="ml-[24px] h-px w-[2px] bg-[#006699]" /><div className="ml-[26px] h-px w-[2px] bg-[#006699]" /></div>
        </div>
        <div className="pl-[14px] pt-[32px] text-[22px] leading-[26px] tracking-[-0.1px] text-[#006699]">Test Forum 1</div>
        <div className="pl-[14px] leading-[13px]">Moderators: None</div>
        <div className="flex justify-between pl-[14px] pr-[14px] pt-[15px] leading-[13px]">
          <div>Users browsing this forum: None</div>
          <div className="tracking-[-0.1px]">Goto page 1, <Link>2</Link>, <Link>3</Link>&nbsp; <Link>Next</Link></div>
        </div>
        <div className="flex h-[32px] pl-[14px] pr-[14px]">
          <Icon w={82} h={26} className="mt-[7px]">
            <rect x="0.700" y="0.700" width="80.600" height="24" rx="12" fill="url(#pill)" stroke="#1f6c97" strokeWidth="1.200" />
            <path d="M9.500 5 L15.500 5.500 L18.500 8.500 L18 18.500 L6 17Z" fill="#fff" stroke="#333" strokeWidth="1.200" /><path d="M9.500 8.500h5M9 11h7M8.500 13.500h7" stroke="#444" />
            <text x="23" y="16.500" fontFamily="Open Sans" fontWeight="600" fontSize="12.500" letterSpacing="0" fill="#1f6c97" textLength="22">new</text>
            <text x="46.500" y="16.500" fontFamily="Open Sans" fontWeight="bold" fontSize="12.500" letterSpacing="0" fill="#f8931f" textLength="29">topic</text>
          </Icon>
          <div className="ml-[15px] mt-[13px] grow text-[11px] leading-[13px] tracking-[0.08px]"><span className="text-[#006699]">phpBB on MySQL4 Forum Index</span> -&gt; <span className="text-[#006699]">Test Forum 1</span></div>
          <div className="mt-[18px] leading-[13px] tracking-[-0.12px]"><Link>Mark all topics read</Link></div>
        </div>
        <TopicTable />
      </div>
      <div className="ml-[8px] flex w-[15px] flex-col bg-[#d8d0ca]">
        <div className="flex h-[15px] items-center justify-center border border-[#9d8f83] bg-[#f3f0ed]"><Icon w={7} h={4}><path d="M0.500 3.500 L3.500 0.500 L6.500 3.500" stroke="#333" strokeWidth="1.300" /></Icon></div>
        <div className="mt-[16px] flex h-[44px] items-center justify-center border border-[#9d8f83] bg-[#f3f0ed]"><Icon w={5} h={8}><path d="M0 1h5M0 4h5M0 7h5" stroke="#a0958c" /></Icon></div>
        <div className="mt-auto flex h-[15px] items-center justify-center border border-[#9d8f83] bg-[#f3f0ed]"><Icon w={7} h={4}><path d="M0.500 0.500 L3.500 3.500 L6.500 0.500" stroke="#333" strokeWidth="1.300" /></Icon></div>
      </div>
    </div>
  );
}

function StatusBar() {
  return (
    <div className="flex h-[25px] shrink-0 items-center justify-between border-b border-t border-[#b3a79b] bg-[#efebe7] pl-[8px] pr-[6px]">
      <div className="pb-[3px]">Done</div>
      <Icon w={16} h={16} className="-mt-[2px]"><path d="M2 8l4 1M3 4l4 3M8 14l0-4M12 13l-2-4M1 12l4-1M9 2l1 4M15 8l-4-1" stroke="#7a5b3c" /><ellipse cx="7" cy="9.500" rx="2.800" ry="5.500" transform="rotate(40 7 9.500)" fill="#dd7b3a" stroke="#8f4313" strokeWidth="0.800" /><circle cx="12" cy="4" r="2.300" fill="#333" /><path d="M5 7l4 4" stroke="#f6c79a" /></Icon>
    </div>
  );
}

function Task({ icon, label, pressed, wide }) {
  return (
    <div className={cx("mr-[2px] flex h-[22px] shrink-0 items-center rounded-[2px] border border-[#8f857c]", wide ? "w-[67px]" : "w-[66px]", pressed ? "bg-[#d6cdc5]" : "bg-linear-to-b from-[#f8f6f4] to-[#e6e1dc]")}>
      <div className="ml-[6px] flex w-[24px] shrink-0">{icon}</div><div>{label}</div>
    </div>
  );
}

function TaskBar() {
  return (
    <div className="flex h-[25px] shrink-0 items-center bg-[#efebe7] pl-px">
      <div className="flex h-[22px] w-[22px] items-center justify-center rounded-[2px] border border-[#8f857c] bg-[#f3f0ed]">
        <Icon w={14} h={12}><rect x="0.500" y="0.500" width="13" height="11" fill="#fff" stroke="#222" /><path d="M4 0.500h6M4 11.500h6M0.500 4v4M13.500 4v4" stroke="#fff" /><rect x="2.500" y="2.500" width="9" height="7" fill="#8d4524" stroke="#3a1a0c" /><path d="M3 3h5l-5 4Z" fill="#d99a78" /></Icon>
      </div>
      <Icon w={4} h={8} className="ml-[4px] mr-[4px]"><path d="M0 1h4M0 4h4M0 7h4" stroke="#b5aca3" /></Icon>
      <Task label="[h..." icon={<Icon w={14} h={16} className="opacity-40"><rect x="0.500" y="0.500" width="13" height="15" fill="#fff" stroke="#999" /><path d="M3 4h8M3 7h8M3 10h8M3 13h5" stroke="#bbb" /></Icon>} />
      <Task label="[s..." icon={<Terminal w={16} h={15} className="opacity-50" />} />
      <Task label="se..." icon={<Terminal w={16} h={15} />} />
      <Task label=" ..." icon={<Icon w={16} h={16} className="opacity-60"><path d="M2 1h12v7h-12Z" fill="#f7f7f5" stroke="#b5b5b0" /><rect x="0.500" y="7.500" width="15" height="7" fill="#c7c7c3" stroke="#999" /><path d="M3 10h10M3 12h10" stroke="#fff" /></Icon>} />
      <Task wide label="*t..." icon={<Icon w={16} h={16}><path d="M1.500 2 H13 V11 L9 15 H3Z" fill="#fff" stroke="#777" /><path d="M2 1.500h11" stroke="#555" strokeWidth="2" strokeDasharray="1.500 1" /><path d="M3.500 5h7M4 7.500h6M4 10h4" stroke="#aaa" /><path d="M7.500 13.500 L14.500 6" stroke="#f28b1d" strokeWidth="2.800" /></Icon>} />
      <Task label="[s..." icon={<Terminal w={16} h={15} className="opacity-50" />} />
      <Task pressed label=" ..." icon={<Firefox s={16} />} />
      <Task label="[L..." icon={<Icon w={16} h={16} className="opacity-80"><circle cx="8" cy="8" r="6.500" fill="#dcb36b" stroke="#aaa79f" strokeWidth="2" /><path d="M8 2v8h4" stroke="#fff" strokeWidth="2.500" /><path d="M2 10 q6 5 12 0" stroke="#888" /></Icon>} />
      <Task label="[I..." icon={<Icon w={16} h={16}><rect x="0.500" y="0.500" width="15" height="15" rx="1" fill="#9bcf8c" stroke="#6f9c63" /><path d="M2 14 Q4 5 12 3 Q8 8 10.500 14" stroke="#4c8240" fill="#b5dda8" /></Icon>} />
      <Task wide label="[D..." icon={<Firefox s={16} className="opacity-60" />} />
      <div className="ml-px flex h-[22px] w-[56px] border border-[#8f857c] bg-[#b0a496]"><div className="flex w-[26px] items-center justify-center border-2 border-[#1e1508] bg-[#fbe7c9]"><Firefox s={15} /></div></div>
      <Icon w={20} h={22} className="ml-[3px]"><path d="M2 8 L3 3 L7 1 L11 2 L15 1 L18 5 L18 9Z" fill="#e8e8e6" stroke="#999" /><path d="M5 4l4 3M12 3l-2 4M15 6l-3 1" stroke="#aaa" /><path d="M1 8 H19 L17.500 21.500 H2.500Z" fill="#f57b1c" stroke="#c65a08" /><path d="M1 8.500h18" stroke="#fbc08a" strokeWidth="1.500" /><circle cx="10" cy="15" r="2.800" stroke="#fff" strokeWidth="1.600" strokeDasharray="4.500 1.300" /></Icon>
    </div>
  );
}

function Guest() {
  return (
    <div className="relative ml-[284px] mt-[125px] flex h-[600px] w-[800px] flex-col overflow-hidden whitespace-nowrap bg-[#efebe7] font-['DejaVu_Sans',sans-serif] text-[13.500px] leading-[18px] tracking-[-0.25px] text-[#101010]">
      <GnomePanel />
      <TitleBar />
      <MenuBar />
      <NavBar />
      <Bookmarks />
      <Tabs />
      <PasswordBar />
      <Forum />
      <StatusBar />
      <TaskBar />
      <Icon w={13} h={21} className="absolute left-[556px] top-[512px]"><path d="M0.700 1 V16.500 L4.300 13 L7 19.500 L9.800 18.200 L7 12 H11.800Z" fill="#fff" stroke="#000" strokeWidth="1.100" /></Icon>
    </div>
  );
}

/* VirtualBox status indicators */

function VBoxStatus() {
  return (
    <div className="mt-auto flex h-[23px] shrink-0 items-center justify-end gap-[6px] border-t border-[#d8d5d2] bg-[#f2f1f0] pb-[2px] pr-[3px] shadow-[inset_0_1px_0_#fafafa]">
      <Icon w={15} h={15}><rect x="1.500" y="0.500" width="12" height="14" rx="1" fill="#58a4ef" stroke="#123f82" /><circle cx="7.500" cy="6.500" r="4" fill="#cfe6fb" stroke="#fff" /><path d="M4 12 L10 5 Q7 4 6 7 Q7 9 10 8" stroke="#1a4d94" strokeWidth="1.200" /></Icon>
      <Icon w={15} h={15}><circle cx="7.500" cy="7.500" r="6.800" fill="#dedede" stroke="#a9a9a9" /><circle cx="7.500" cy="7.500" r="2.500" fill="#fff" stroke="#aaa" /><path d="M3.500 7.500a4 4 0 0 1 4-4" stroke="#fff" /></Icon>
      <Icon w={15} h={15}><rect x="6" y="1" width="8.500" height="7" fill="#2b7ae0" stroke="#555" /><path d="M8 10h6" stroke="#555" strokeWidth="1.500" /><rect x="0.500" y="5" width="9" height="7" fill="#2b7ae0" stroke="#444" /><rect x="1.500" y="6" width="7" height="5" stroke="#fff" strokeWidth="0.800" /><path d="M2.500 14h6" stroke="#444" strokeWidth="1.500" /></Icon>
      <Icon w={15} h={15}><path d="M3.500 8 L10 1.500 Q12.500 -0.500 14.500 1.500 Q16 4 13.500 6 L7.500 12 Q3 13 1 14.500 Q2.500 12 3.500 8Z" fill="#3f92e8" stroke="#123f82" /><path d="M5.500 8.500 L11 3" stroke="#b8dcff" strokeWidth="1.800" /></Icon>
      <Icon w={15} h={15}><path d="M0.500 13.500 V4 L2 3 H7 L9 1.500 H14.500 V13.500Z" fill="#d2d2d2" stroke="#a5a5a5" /><path d="M1 5h13" stroke="#eee" /></Icon>
      <Icon w={15} h={15}><rect x="0.700" y="0.700" width="13.600" height="10" fill="#1e74dd" stroke="#eee" /><rect x="0.300" y="0.300" width="14.400" height="11" stroke="#333" strokeWidth="0.800" /><path d="M1.500 1.500h12v3.500h-12Z" fill="#4aa0f5" /><path d="M3 13.500h9" stroke="#444" strokeWidth="2" /></Icon>
      <Icon w={15} h={15}><rect x="0.500" y="4.500" width="10" height="7" fill="#2b7ae0" stroke="#333" /><path d="M2.500 13.800h7" stroke="#444" strokeWidth="1.500" /><rect x="6.500" y="0.500" width="8" height="7" fill="#9ea8f0" stroke="#3b46a8" /><path d="M4 6l3-2" stroke="#fff" /></Icon>
      <Icon w={15} h={15}><rect x="1" y="1" width="13" height="13" stroke="#313fa0" strokeWidth="2" strokeDasharray="1 1" /><rect x="2.300" y="2.300" width="10.400" height="10.400" fill="#8f9ce8" stroke="#313fa0" /><path d="M5.500 4.500v4a2 2 0 0 0 4 0v-4" stroke="#fff" strokeWidth="1.500" /></Icon>
      <Icon w={15} h={15}><circle cx="7" cy="7.500" r="6.500" fill="#4a93dd" stroke="#1a4890" /><path d="M2 4q3-3 5-1q0 3-4 4Z" fill="#d3e9fb" /><path d="M5 4 L10 5 L9 7 Q13 8 12 11 L15 11 L11 15 L7 12 L9 11 Q9 9 7 9 L6 11Z" fill="#7fce28" stroke="#2b6a10" strokeWidth="0.900" /></Icon>
      <Icon w={15} h={15}><rect x="0.700" y="0.700" width="13.600" height="13.600" rx="1.500" fill="#ddeafc" stroke="#27487d" strokeWidth="1.300" /><path d="M5.500 3 H9.500 V7 H12 L7.500 12 L3 7 H5.500Z" fill="#7fce28" stroke="#2b6a10" strokeWidth="0.900" /></Icon>
      <div className="-ml-px w-[74px] whitespace-nowrap pt-[2px] font-['Noto_Sans',sans-serif] text-[16.800px] leading-[20px] text-[#4c4c4c]">Right Ctrl</div>
    </div>
  );
}

export default function App() {
  return (
    <div className="relative flex h-[900px] w-[1440px] flex-col overflow-hidden bg-[#f2f1f0]">
      <Gradients />
      <TopBar />
      <div className="flex h-[873px]">
        <Launcher />
        <div className="flex w-[1367px] flex-col">
          <Guest />
          <VBoxStatus />
        </div>
      </div>
    </div>
  );
}
